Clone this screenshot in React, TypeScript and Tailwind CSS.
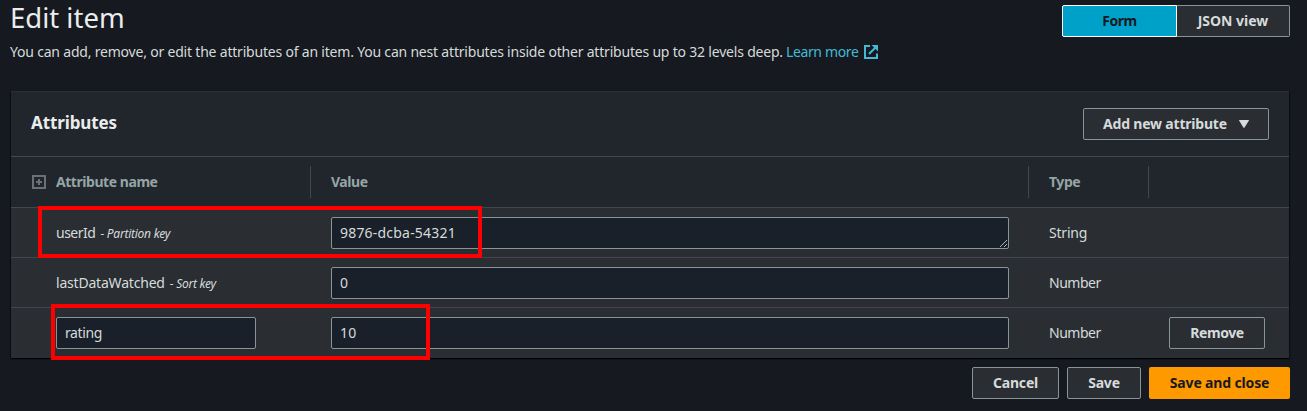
import React from "react";

const ROWS = [
  { name: "userId", nameLs: "tracking-[-0.5px]", key: "Partition key", value: "9876-dcba-54321", type: "String", typeLs: "tracking-[-0.2px]", multiline: true },
  { name: "lastDataWatched", nameLs: "tracking-[-0.2px]", key: "Sort key", value: "0", type: "Number", typeLs: "tracking-[-0.5px]", multiline: false },
];

const field =
  "h-8 rounded-[2px] border border-[#879596] bg-[#1a2029] px-2 text-sm leading-[30px] text-[#d5dbdb] outline-none";
const button =
  "flex h-8 items-center justify-center rounded-[2px] border border-[#879596] bg-[#2a2e33] text-sm font-bold text-[#d5dbdb] whitespace-nowrap";

function ResizeGrip() {
  return (
    <svg className="absolute right-px bottom-px size-[7px]" viewBox="0 0 7 7" stroke="#c4c9ca" strokeWidth="0.9">
      <path d="M0 7L7 0M4 7L7 4" />
    </svg>
  );
}

function Row({ children }: { children: React.ReactNode }) {
  return (
    <div className="grid h-[50px] grid-cols-[300px_718px_120px_140px] items-center border-t border-[#414750] bg-[#2a2e33] pt-px">
      {children}
    </div>
  );
}

export default function App() {
  return (
    <div className="relative h-[411px] w-[1307px] overflow-hidden bg-[#16191f] pr-[17px] pl-[11px] font-['Noto_Sans',sans-serif] text-sm text-[#d5dbdb]">
      <header className="flex h-[91px] justify-between">
        <div>
          <h1 className="-ml-px h-[35px] text-[27.5px] leading-[35px] whitespace-nowrap text-[#eaeded]">Edit item</h1>
          <p className="-ml-px flex items-center pt-[7px] leading-5 whitespace-nowrap">
            <span className="tracking-[-0.2px]">You can add, remove, or edit the attributes of an item. You can nest attributes inside other attributes up to 32 levels deep.</span>
            <a className="ml-[3px] tracking-[-0.35px] text-[#44b9d6]">Learn more</a>
            <svg className="ml-[5px] size-[14px]" viewBox="0 0 14 14" fill="none" stroke="#44b9d6" strokeWidth="2">
              <path d="M6 1H1V13H13V8.5M11.5 2.5L5 9" />
              <path d="M7.5 0H14V6.5Z" fill="#44b9d6" stroke="none" />
            </svg>
          </p>
        </div>
        <div className="mt-[5px] flex">
          <button className="h-8 w-[115px] rounded-l-[2px] border border-white bg-[#00a1c9] text-sm font-bold tracking-[-0.4px] text-[#16191f]">Form</button>
          <button className="h-8 w-[113px] rounded-r-[2px] border border-l-0 border-[#879596] bg-[#2a2e33] text-sm font-bold text-[#d5dbdb]">JSON view</button>
        </div>
      </header>

      <section className="h-[267px] w-[1278px] border-t border-[#2b2f33] bg-[#21252c] shadow-[0_1px_1px_0_rgba(0,0,0,0.6),1px_1px_1px_0_rgba(0,0,0,0.4),-1px_1px_1px_0_rgba(0,0,0,0.4)]">
        <div className="flex h-16 items-center justify-between pr-5 pl-5">
          <h2 className="pb-px text-[17px] font-bold tracking-[-0.1px] text-[#eaeded]">Attributes</h2>
          <button className={`${button} w-[186px]`}>
            <span className="tracking-[-0.2px]">Add new attribute</span>
            <svg className="ml-3 h-2 w-2.5" viewBox="0 0 10 8" fill="#d5dbdb">
              <path d="M0.4 0H9.6Q10.2 0 9.8 0.8L5.6 7.6Q5 8.4 4.4 7.6L0.2 0.8Q-0.2 0 0.4 0Z" />
            </svg>
          </button>
        </div>
        <div className="grid h-[51px] grid-cols-[300px_718px_120px_140px] items-center border-t border-[#414750] font-bold tracking-[-0.45px] text-[#95a5a6]">
          <div className="flex h-8 items-center border-r border-[#414750] pl-[21px]">
            <svg className="mr-[10px] size-[14px]" viewBox="0 0 14 14" fill="none" stroke="#687078" strokeWidth="2">
              <path d="M1 1H13V13H1ZM4 7H10M7 4V10" />
            </svg>
            <span>Attribute name</span>
          </div>
          <div className="flex h-8 items-center border-r border-[#414750] pl-5">Value</div>
          <div className="flex h-8 items-center border-r border-[#414750] pl-5">Type</div>
        </div>
        {ROWS.map((r) => (
          <Row key={r.name}>
            <div className="flex items-center pl-[45px] whitespace-nowrap">
              <span className={r.nameLs}>{r.name}</span>
              <span className="ml-[5px] pt-0.5 text-xs tracking-[-0.25px] italic">- {r.key}</span>
            </div>
            <div className="pl-5">
              <div className={`${field} relative w-[678px] tracking-[0.2px]`}>
                {r.value}
                {r.multiline && <ResizeGrip />}
              </div>
            </div>
            <div className={`pl-5 ${r.typeLs}`}>{r.type}</div>
          </Row>
        ))}
        <Row>
          <div className="pl-[45px]">
            <div className={`${field} w-[200px] tracking-[-0.4px]`}>rating</div>
          </div>
          <div className="pl-5">
            <div className={`${field} w-[678px] tracking-[0.2px]`}>10</div>
          </div>
          <div className="pl-5 tracking-[-0.5px]">Number</div>
          <div className="pl-5">
            <button className={`${button} w-24 tracking-[-0.4px]`}>Remove</button>
          </div>
        </Row>
        <div className="h-px bg-[#2a2e33]" />
      </section>

      <footer className="flex justify-end gap-2 pt-[9px]">
        <button className={`${button} w-[87px] tracking-[-0.2px]`}>Cancel</button>
        <button className={`${button} w-[74px] tracking-[-0.2px]`}>Save</button>
        <button className="h-8 w-[141px] rounded-[2px] bg-[#ff9900] text-sm font-bold tracking-[-0.15px] whitespace-nowrap text-[#16191f]">Save and close</button>
      </footer>

      <div className="absolute top-[206px] left-[38px] h-[52px] w-[444px] border-4 border-[#ff0000]" />
      <div className="absolute top-[304px] left-[51px] h-[56px] w-[379px] border-4 border-[#ff0000]" />
    </div>
  );
}
